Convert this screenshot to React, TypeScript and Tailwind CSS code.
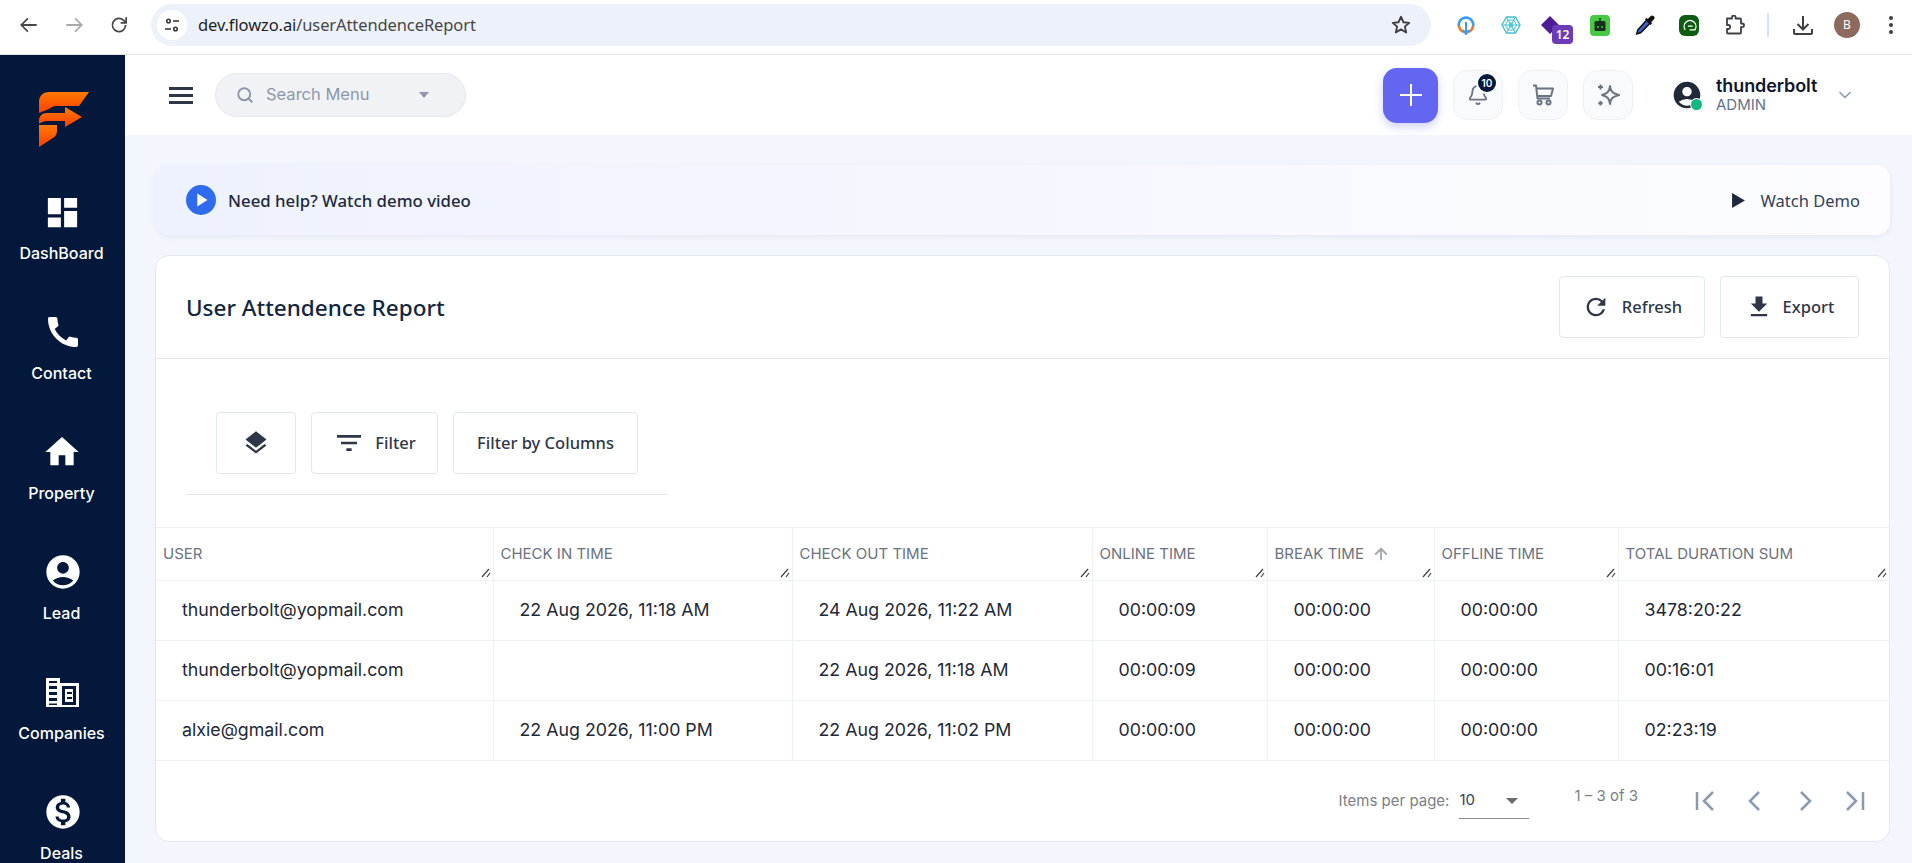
import { ArrowUp, ChevronDown, Search, Bell } from "lucide-react";
import type { ReactNode } from "react";
import {
  MdAccountCircle,
  MdCall,
  MdDashboard,
  MdFileDownload,
  MdFilterList,
  MdHome,
  MdLayers,
  MdMonetizationOn,
  MdPlayArrow,
  MdRefresh,
} from "react-icons/md";

function CompaniesIcon() {
  return (
    <svg viewBox="0 0 33 29" className="w-[33px] h-[29px]">
      <path d="M0 0h14v5h19v24H0z" fill="#fff" />
      <path d="M3 3h8v2H3zM3 8h8v3H3zM3 14h8v3H3zM3 20h8v3H3zM3 25.500h8V27H3z" fill="#03183a" />
      <path d="M16 8h14v19H16z" fill="#03183a" />
      <path d="M19 11h8v13h-8z" fill="#fff" />
      <path d="M21 14h5v2h-5zM21 19h5v2h-5z" fill="#03183a" />
    </svg>
  );
}

function Logo() {
  return (
    <svg viewBox="0 0 50 55" className="w-[50px] h-[55px]">
      <defs>
        <linearGradient id="logoFill" x1="0" y1="0" x2="0" y2="1">
          <stop offset="0" stopColor="#ff7a00" />
          <stop offset="1" stopColor="#ff3d00" />
        </linearGradient>
      </defs>
      <path d="M10 0H50L40 14H18C14 14 13 15 10 17L0 21V10C0 4 4 0 10 0Z" fill="url(#logoFill)" />
      <path d="M8 21H26V15L43 25L26 35V29H9C4 29 1 31 0 32V29C0 24 3 21 8 21Z" fill="url(#logoFill)" />
      <path d="M0 33H18V38C18 42 17 44 14 46L0 55Z" fill="url(#logoFill)" />
    </svg>
  );
}

function ChromeExtensions() {
  return (
    <div className="flex items-center">
      {/* orange/blue ring */}
      <div className="w-[45px] flex justify-center">
        <svg viewBox="0 0 20 20" className="w-5 h-5" fill="none">
          <path d="M3 12A7.500 7.500 0 0 1 10 2.500" stroke="#3b9bf0" strokeWidth="2.500" />
          <path d="M10 2.500A7.500 7.500 0 0 1 17 12" stroke="#3b9bf0" strokeWidth="2.500" />
          <path d="M3 11A7.500 7.500 0 0 0 8 17" stroke="#f07a2c" strokeWidth="2.500" />
          <path d="M17 11A7.500 7.500 0 0 1 12 17" stroke="#f07a2c" strokeWidth="2.500" />
          <path d="M10 7v11M7 15l3 4 3-4" stroke="#3b9bf0" strokeWidth="2" />
        </svg>
      </div>
      {/* web hexagon */}
      <div className="w-[45px] flex justify-center">
        <svg viewBox="0 0 20 20" className="w-5 h-5" fill="none" stroke="#45c1cf" strokeWidth="1">
          <path d="M5.500 2h9L19 10l-4.500 8h-9L1 10z" strokeWidth="1.400" />
          <path d="M7.200 5h5.600l2.800 5-2.800 5H7.200l-2.800-5zM9 8h2l1 2-1 2H9l-1-2zM1 10h18M5.500 2l9 16M14.500 2l-9 16" />
        </svg>
      </div>
      {/* purple badge */}
      <div className="w-[45px] flex justify-center relative">
        <svg viewBox="0 0 20 20" className="w-5 h-5 -ml-[12px]">
          <path d="M10 1l9 9-9 9-9-9z" fill="#4c1d95" />
        </svg>
        <span className="absolute left-[19px] top-[10px] w-[21px] h-[19px] rounded-[4px] bg-[#6d3bb8] text-white text-[12px] font-semibold flex items-center justify-center font-['Noto_Sans',sans-serif]">
          12
        </span>
      </div>
      {/* robot */}
      <div className="w-[44px] flex justify-center">
        <div className="w-5 h-[21px] rounded-[4px] bg-[#47c945] flex items-center justify-center">
          <svg viewBox="0 0 14 14" className="w-[14px] h-[14px]">
            <path d="M6.300 0h1.400v3H6.300z" fill="#16301a" />
            <rect x="1.500" y="3" width="11" height="10" rx="1.500" fill="#16301a" />
            <circle cx="5" cy="9" r="1" fill="#47c945" />
            <circle cx="9" cy="9" r="1" fill="#47c945" />
          </svg>
        </div>
      </div>
      {/* dropper */}
      <div className="w-[45px] flex justify-center">
        <svg viewBox="0 0 20 20" className="w-[22px] h-[22px]">
          <path d="M11.500 5.500l3 3-8.500 8.500-3.500 1 1-3.500z" fill="#3f63c9" stroke="#111" strokeWidth="1.400" />
          <path d="M10 5l5 5 1.500-1.500-1-1 2.500-2.500c1-1 1-2 0-3s-2-1-3 0L12.500 4.500l-1-1z" fill="#111" />
        </svg>
      </div>
      {/* green circle */}
      <div className="w-[44px] flex justify-center">
        <div className="w-5 h-[21px] rounded-[6px] bg-[#0d5c12] flex items-center justify-center">
          <svg viewBox="0 0 14 14" className="w-[15px] h-[15px]" fill="none" stroke="#fff" strokeWidth="1.200">
            <path d="M3 11a5.500 5.500 0 1 1 9 0H7M5.500 7.500H10" />
          </svg>
        </div>
      </div>
      {/* chrome puzzle piece */}
      <div className="w-[48px] flex justify-center">
        <svg viewBox="0 0 20 20" className="w-[20px] h-[20px]" fill="none" stroke="#3c4043" strokeWidth="1.800" strokeLinejoin="round">
          <path d="M2 3h5V1.800a1.800 1.800 0 0 1 3.600 0V3H15a1 1 0 0 1 1 1v4h1.200a1.800 1.800 0 0 1 0 3.600H16V17a1 1 0 0 1-1 1H3a1 1 0 0 1-1-1v-3.500h1.200a2 2 0 0 0 0-4H2z" transform="translate(0 .5)" />
        </svg>
      </div>
    </div>
  );
}

function BrowserBar() {
  return (
    <div className="h-[55px] shrink-0 bg-white border-b border-[#e3e3e3] flex items-center pb-[4px]">
      <div className="w-[151px] flex items-center shrink-0 pl-[18px] gap-[23px]">
        <svg viewBox="0 0 20 20" className="w-[22px] h-[22px]" fill="none" stroke="#474747" strokeWidth="1.600">
          <path d="M17 10H3.500M9 4l-6 6 6 6" />
        </svg>
        <svg viewBox="0 0 20 20" className="w-[22px] h-[22px]" fill="none" stroke="#a8a8a8" strokeWidth="1.600">
          <path d="M3 10h13.500M11 4l6 6-6 6" />
        </svg>
        <svg viewBox="0 0 20 20" className="w-[22px] h-[22px]" fill="none" stroke="#474747" strokeWidth="1.600">
          <path d="M16 10a6 6 0 1 1-1.800-4.300L16 7.500" />
          <path d="M16.500 3v5h-5" fill="none" />
        </svg>
      </div>
      <div className="w-[1280px] h-[42px] rounded-full bg-[#edf2fa] flex items-center pl-[6px] pr-[19px] shrink-0">
        <div className="w-[30px] h-[30px] rounded-full bg-white flex items-center justify-center">
          <svg viewBox="0 0 16 16" className="w-4 h-4" fill="none" stroke="#303133" strokeWidth="1.500">
            <circle cx="4.500" cy="4" r="1.800" />
            <path d="M9 4h6M1 12h6" />
            <circle cx="11.500" cy="12" r="1.800" />
          </svg>
        </div>
        <span className="ml-[11px] text-[16.500px] text-[#1f1f1f] font-['Noto_Sans',sans-serif] tracking-[-0.1px]">
          dev.flowzo.ai<span className="text-[#474747]">/userAttendenceReport</span>
        </span>
        <svg viewBox="0 0 24 24" className="ml-auto w-[22px] h-[22px]" fill="none" stroke="#3c4043" strokeWidth="2" strokeLinejoin="round">
          <path d="M12 3l2.700 6 6.300.6-4.800 4.200 1.500 6.400L12 16.800 6.300 20.200l1.500-6.400L3 9.600 9.300 9z" />
        </svg>
      </div>
      <div className="ml-[12px]">
        <ChromeExtensions />
      </div>
      <div className="w-[2px] h-[24px] bg-[#d3e3fd] ml-[8px]" />
      <svg viewBox="0 0 24 24" className="w-[24px] h-[24px] ml-[22px]" fill="none" stroke="#3c4043" strokeWidth="2">
        <path d="M12 3v13M6.500 11l5.500 5.500 5.500-5.500M3 16v4a1 1 0 0 0 1 1h16a1 1 0 0 0 1-1v-4" />
      </svg>
      <div className="w-[26px] h-[26px] rounded-full bg-[#8c6a5d] text-white text-[12px] flex items-center justify-center ml-[19px] font-['Noto_Sans',sans-serif]">
        B
      </div>
      <div className="ml-[29px] flex flex-col gap-[3px]">
        <span className="w-[4px] h-[4px] rounded-full bg-[#3c4043]" />
        <span className="w-[4px] h-[4px] rounded-full bg-[#3c4043]" />
        <span className="w-[4px] h-[4px] rounded-full bg-[#3c4043]" />
      </div>
    </div>
  );
}

const navItems = [
  { label: "DashBoard", icon: <MdDashboard className="w-[39px] h-[39px]" /> },
  { label: "Contact", icon: <MdCall className="w-[40px] h-[40px]" /> },
  { label: "Property", icon: <MdHome className="w-[40px] h-[40px]" /> },
  { label: "Lead", icon: <MdAccountCircle className="w-[40px] h-[40px]" /> },
  { label: "Companies", icon: <CompaniesIcon /> },
  { label: "Deals", icon: <MdMonetizationOn className="w-[40px] h-[40px]" /> },
];

function Sidebar() {
  return (
    <aside className="w-[125px] shrink-0 bg-[#03183a] text-white flex flex-col items-center overflow-hidden">
      <div className="mt-[37px] mb-[45px] ml-[3px]">
        <Logo />
      </div>
      {navItems.map((item) => (
        <div key={item.label} className="h-[120px] shrink-0 flex flex-col items-center">
          <div className="h-[40px] flex items-center justify-center">{item.icon}</div>
          <span className="mt-[11px] -ml-[2px] text-[16px] leading-[20px] font-medium">{item.label}</span>
        </div>
      ))}
    </aside>
  );
}

function TopBar() {
  return (
    <div className="h-[80px] shrink-0 bg-white flex items-center pl-[44px] pr-[57px]">
      <div className="flex flex-col gap-[4px] w-[24px]">
        <span className="h-[3px] w-[24px] bg-[#2d3748]" />
        <span className="h-[3px] w-[24px] bg-[#2d3748]" />
        <span className="h-[3px] w-[24px] bg-[#2d3748]" />
      </div>
      <div className="ml-[22px] w-[251px] h-[44px] rounded-full bg-[#f0f2f6] border border-[#e3e7ee] flex items-center pl-[20px] pr-[36px]">
        <Search className="w-[18px] h-[18px] text-[#8c97a8]" strokeWidth={2.5} />
        <span className="ml-[12px] pb-[2px] text-[16.500px] text-[#8e98a8]">Search Menu</span>
        <span className="ml-auto w-0 h-0 border-x-[5px] border-x-transparent border-t-[6px] border-t-[#8e98a8]" />
      </div>
      <div className="ml-auto flex items-center">
        <div className="w-[55px] h-[55px] rounded-[14px] bg-[#6366f1] shadow-[0_4px_10px_rgba(99,102,241,0.3)] flex items-center justify-center">
          <svg viewBox="0 0 24 24" className="w-[24px] h-[24px]" fill="none" stroke="#fff" strokeWidth="2">
            <path d="M12 1v22M1 12h22" />
          </svg>
        </div>
        <div className="relative ml-[15px] w-[50px] h-[50px] rounded-[14px] bg-[#f8fafc] border border-[#eef1f6] flex items-center justify-center">
          <Bell className="w-[22px] h-[22px] text-[#6b7280]" />
          <span className="absolute top-[3px] right-[6px] w-[18px] h-[18px] rounded-full bg-[#03183a] ring-2 ring-white text-white text-[10px] font-semibold flex items-center justify-center">
            10
          </span>
        </div>
        <div className="ml-[15px] w-[50px] h-[50px] rounded-[14px] bg-[#f8fafc] border border-[#eef1f6] flex items-center justify-center">
          <svg viewBox="0 0 22 22" className="w-[22px] h-[22px]" fill="none" stroke="#6b7280" strokeWidth="2" strokeLinejoin="round">
            <path d="M1 1.500h3l1.500 13h12.500" />
            <path d="M4.400 4.500H21l-2 7.500H5.200" />
            <circle cx="7.500" cy="18.500" r="2" />
            <circle cx="16.500" cy="18.500" r="2" />
          </svg>
        </div>
        <div className="ml-[15px] w-[50px] h-[50px] rounded-[14px] bg-[#f8fafc] border border-[#eef1f6] flex items-center justify-center">
          <svg viewBox="0 0 24 24" className="w-[24px] h-[24px]" fill="none" stroke="#6b7280" strokeWidth="2" strokeLinejoin="round">
            <path d="M14 3c.6 5.500 2.500 7.500 9 9-6.500 1.500-8.400 3.500-9 9-.6-5.500-2.500-7.500-8-9 5.500-1.500 7.400-3.500 8-9z" />
            <path d="M4.500 1.500v5M2 4h5M4.500 18v4.500M2.300 20.200h4.400" />
          </svg>
        </div>
        <div className="relative ml-[38px]">
          <MdAccountCircle className="w-[32px] h-[32px] text-[#1f2937]" />
          <span className="absolute right-[1px] bottom-[1px] w-[11px] h-[11px] rounded-full bg-[#10b981] ring-1 ring-white" />
        </div>
        <div className="ml-[13px] w-[119px] flex flex-col">
          <span className="text-[18px] leading-[20px] font-semibold text-[#0f172a] tracking-[-0.1px]">thunderbolt</span>
          <span className="text-[15px] leading-[18px] text-[#64748b]">ADMIN</span>
        </div>
        <ChevronDown className="w-[20px] h-[20px] text-[#8ea0b8]" />
      </div>
    </div>
  );
}

function OutlineButton({ children, className }: { children: ReactNode; className: string }) {
  return (
    <div className={`rounded-[4px] border border-[#e2e8f0] bg-white flex items-center justify-center text-[#2d3748] text-[16.500px] font-medium font-['Noto_Sans',sans-serif] ${className}`}>
      {children}
    </div>
  );
}

function ResizeHandle() {
  return (
    <svg viewBox="0 0 10 10" className="absolute right-[2px] bottom-[2px] w-[10px] h-[10px]" fill="none" stroke="#444" strokeWidth="1.200">
      <path d="M1 9L8 1M6 9L9 5" />
    </svg>
  );
}

const columns = [
  { label: "USER", width: "w-[337px]" },
  { label: "CHECK IN TIME", width: "w-[299px]" },
  { label: "CHECK OUT TIME", width: "w-[300px]" },
  { label: "ONLINE TIME", width: "w-[175px]" },
  { label: "BREAK TIME", width: "w-[167px]", sorted: true },
  { label: "OFFLINE TIME", width: "w-[184px]" },
  { label: "TOTAL DURATION SUM", width: "w-[271px]" },
];

const rows = [
  ["thunderbolt@yopmail.com", "22 Aug 2026, 11:18 AM", "24 Aug 2026, 11:22 AM", "00:00:09", "00:00:00", "00:00:00", "3478:20:22"],
  ["thunderbolt@yopmail.com", "", "22 Aug 2026, 11:18 AM", "00:00:09", "00:00:00", "00:00:00", "00:16:01"],
  ["alxie@gmail.com", "22 Aug 2026, 11:00 PM", "22 Aug 2026, 11:02 PM", "00:00:00", "00:00:00", "00:00:00", "02:23:19"],
];

function ReportTable() {
  return (
    <table className="table-fixed w-[1733px] border-collapse mt-[32px]">
      <thead>
        <tr className="h-[53px] border-y border-[#edf0f4]">
          {columns.map((col) => (
            <th
              key={col.label}
              className={`relative ${col.width} border-r border-[#edf0f4] last:border-r-0 pl-[7px] text-left text-[15px] font-normal text-[#6b7280]`}
            >
              <span className="inline-flex items-center gap-[8px]">
                {col.label}
                {col.sorted && <ArrowUp className="w-[18px] h-[18px] text-[#a3a8b0]" strokeWidth={2.5} />}
              </span>
              <ResizeHandle />
            </th>
          ))}
        </tr>
      </thead>
      <tbody>
        {rows.map((row, i) => (
          <tr key={i} className="h-[60px] border-b border-[#edf0f4]">
            {row.map((cell, j) => (
              <td key={j} className="border-r border-[#edf0f4] last:border-r-0 pl-[26px] text-[17.800px] text-[#1f2937]">
                {cell}
              </td>
            ))}
          </tr>
        ))}
      </tbody>
    </table>
  );
}

function Pagination() {
  return (
    <div className="flex-1 flex items-center justify-end pr-[22px]">
      <span className="text-[15px] text-[#7a7f87]">Items per page:</span>
      <div className="ml-[10px] w-[70px] h-[36px] border-b border-[#8a8a8a] flex items-center justify-between pr-[11px]">
        <span className="text-[15px] text-[#374151]">10</span>
        <span className="w-0 h-0 border-x-[6px] border-x-transparent border-t-[6px] border-t-[#6b6b6b]" />
      </div>
      <span className="ml-[45px] text-[15px] text-[#7a7f87] -mt-[9px]">1 – 3 of 3</span>
      <div className="ml-[55px] flex items-center gap-[26px] text-[#8a9ab0]">
        <svg viewBox="0 0 24 24" className="w-[24px] h-[24px]" fill="none" stroke="currentColor" strokeWidth="2.500">
          <path d="M4 3v18M20 3l-9 9 9 9" />
        </svg>
        <svg viewBox="0 0 24 24" className="w-[24px] h-[24px]" fill="none" stroke="currentColor" strokeWidth="2.500">
          <path d="M16 3l-9 9 9 9" />
        </svg>
        <svg viewBox="0 0 24 24" className="w-[24px] h-[24px]" fill="none" stroke="currentColor" strokeWidth="2.500">
          <path d="M8 3l9 9-9 9" />
        </svg>
        <svg viewBox="0 0 24 24" className="w-[24px] h-[24px]" fill="none" stroke="currentColor" strokeWidth="2.500">
          <path d="M20 3v18M4 3l9 9-9 9" />
        </svg>
      </div>
    </div>
  );
}

export default function App() {
  return (
    <div className="h-[863px] w-[1912px] overflow-hidden flex flex-col font-['Inter',sans-serif] bg-[#f3f6fd]">
      <BrowserBar />
      <div className="flex-1 flex min-h-0">
        <Sidebar />
        <main className="flex-1 flex flex-col min-w-0">
          <TopBar />
          <div className="px-[30px] pr-[22px] pt-[30px] pb-[21px] flex-1 flex flex-col min-h-0">
            {/* Banner */}
            <div className="h-[70px] shrink-0 rounded-[14px] bg-gradient-to-r from-[#eef2fe] to-[#fdfdff] shadow-[0_2px_6px_rgba(15,23,42,0.06)] flex items-center pl-[31px] pr-[30px] font-['Noto_Sans',sans-serif]">
              <div className="w-[30px] h-[30px] rounded-full bg-[#2f6bed] flex items-center justify-center">
                <MdPlayArrow className="w-[22px] h-[22px] text-white" />
              </div>
              <span className="ml-[12px] pt-[2px] text-[16.800px] font-medium text-[#1e293b]">Need help? Watch demo video</span>
              <div className="ml-auto flex items-center gap-[16px] text-[#334155]">
                <svg viewBox="0 0 12 14" className="w-[13px] h-[15px]">
                  <path d="M0 0l12 7-12 7z" fill="#1e293b" />
                </svg>
                <span className="pt-[2px] text-[16.500px]">Watch Demo</span>
              </div>
            </div>
            {/* Card */}
            <div className="mt-[20px] flex-1 min-h-0 rounded-[14px] bg-white border border-[#e2e8f0] flex flex-col overflow-hidden">
              <div className="h-[103px] shrink-0 border-b border-[#e2e8f0] flex items-center pl-[30px] pr-[30px]">
                <h1 className="pt-[2px] text-[22.500px] font-medium text-[#12263f] font-['Noto_Sans',sans-serif]">User Attendence Report</h1>
                <div className="ml-auto flex gap-[15px]">
                  <OutlineButton className="w-[146px] h-[62px] gap-[12px]">
                    <MdRefresh className="w-[28px] h-[28px]" />
                    Refresh
                  </OutlineButton>
                  <OutlineButton className="w-[139px] h-[62px] gap-[10px]">
                    <MdFileDownload className="w-[28px] h-[28px]" />
                    Export
                  </OutlineButton>
                </div>
              </div>
              <div className="pl-[30px] pt-[53px]">
                <div className="w-[482px] pl-[30px] pb-[20px] border-b border-[#e2e8f0] flex gap-[15px]">
                  <OutlineButton className="w-[80px] h-[62px]">
                    <MdLayers className="w-[28px] h-[28px]" />
                  </OutlineButton>
                  <OutlineButton className="w-[127px] h-[62px] gap-[10px]">
                    <MdFilterList className="w-[32px] h-[32px]" />
                    Filter
                  </OutlineButton>
                  <OutlineButton className="w-[185px] h-[62px]">Filter by Columns</OutlineButton>
                </div>
              </div>
              <ReportTable />
              <Pagination />
            </div>
          </div>
        </main>
      </div>
    </div>
  );
}
